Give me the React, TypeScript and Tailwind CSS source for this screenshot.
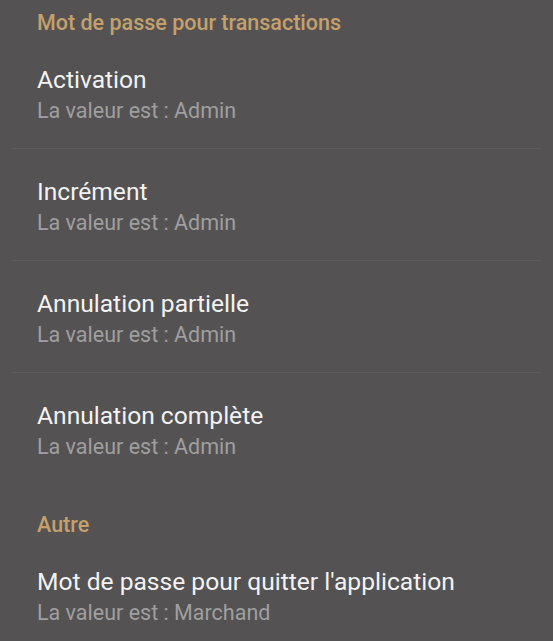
import React from 'react';

interface PrefItem {
  title: string;
  value: string;
}

interface PrefSection {
  header: string;
  items: PrefItem[];
}

const sections: PrefSection[] = [
  {
    header: 'Mot de passe pour transactions',
    items: [
      { title: 'Activation', value: 'Admin' },
      { title: 'Incrément', value: 'Admin' },
      { title: 'Annulation partielle', value: 'Admin' },
      { title: 'Annulation complète', value: 'Admin' },
    ],
  },
  {
    header: 'Autre',
    items: [{ title: "Mot de passe pour quitter l'application", value: 'Marchand' }],
  },
];

const PrefRow: React.FC<{ item: PrefItem; divider: boolean }> = ({ item, divider }) => (
  <div className={`mx-3 pl-[25px] pt-[29px] pb-[23px] ${divider ? 'border-b border-[#5e5c5d]' : ''}`}>
    <div className="text-[24.6px] leading-[28px] text-[#f2f2f2]">{item.title}</div>
    <div className="text-[21.5px] leading-[28px] text-[#a09fa0] mt-[3px]">La valeur est : {item.value}</div>
  </div>
);

export default function App() {
  return (
    <div className="min-h-screen w-full bg-[#545253] font-['Roboto','Liberation_Sans',sans-serif] overflow-hidden">
      {sections.map((section, si) => (
        <div key={section.header} className={si === 0 ? 'pt-[9px]' : 'pt-[27px]'}>
          <div className="pl-[37px] text-[21.5px] leading-[28px] font-medium text-[#c4a06b]">
            {section.header}
          </div>
          {section.items.map((item, i) => (
            <PrefRow key={item.title} item={item} divider={i < section.items.length - 1} />
          ))}
        </div>
      ))}
    </div>
  );
}
